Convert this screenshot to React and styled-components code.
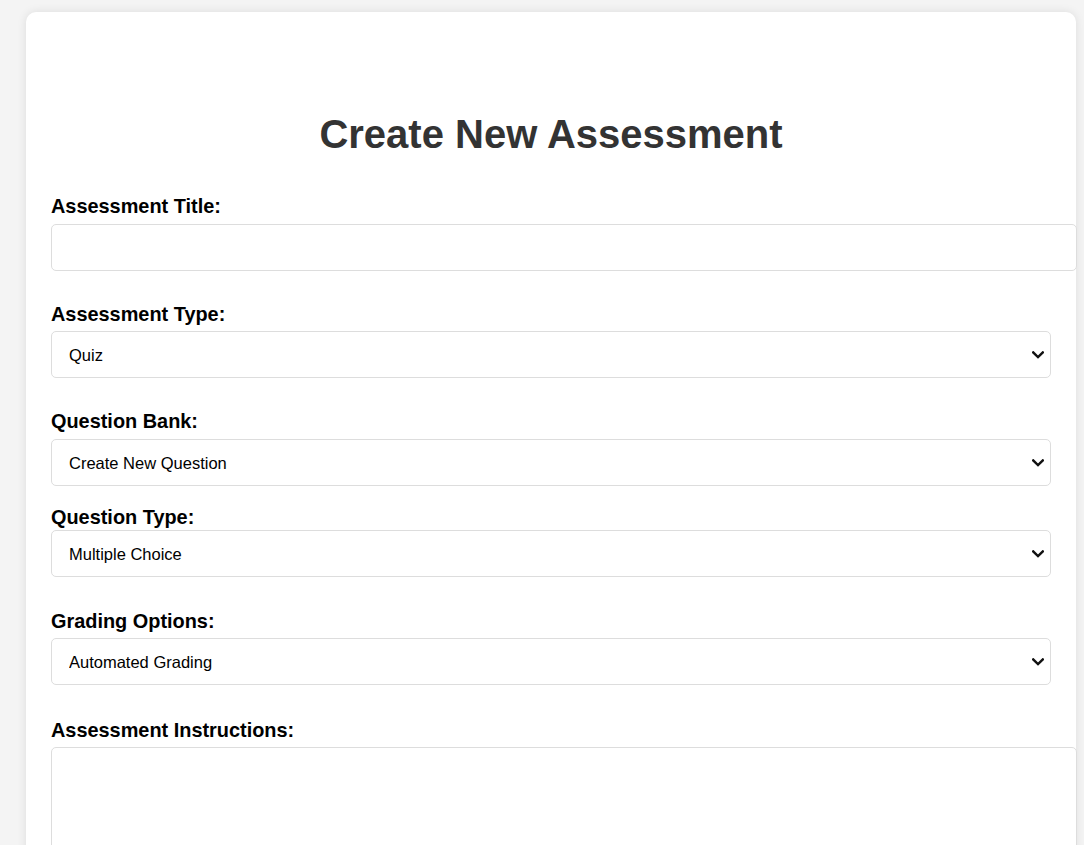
import React from "react";
import styled, { createGlobalStyle } from "styled-components";

const Global = createGlobalStyle`
  html, body { margin: 0; padding: 0; }
  body {
    background: #f4f4f4;
    font-family: "Liberation Sans", Arial, sans-serif;
    padding: 12px 8px 40px 26px;
  }
  * { font-family: "Liberation Sans", Arial, sans-serif; }
`;

const chevron =
  "data:image/svg+xml;utf8," +
  encodeURIComponent(
    '<svg xmlns="http://www.w3.org/2000/svg" width="12" height="8" viewBox="0 0 12 8"><path d="M1.2 1.4 L6 6 L10.8 1.4" fill="none" stroke="#111" stroke-width="2.4" stroke-linecap="square"/></svg>'
  );

const Card = styled.div`
  box-sizing: content-box;
  max-width: 1000px;
  background: #fff;
  padding: 99px 25px 30px;
  border-radius: 10px;
  box-shadow: 0 0 10px rgba(0, 0, 0, 0.1);
`;

const Title = styled.h1`
  margin: 0 0 38px;
  text-align: center;
  font-size: 40px;
  line-height: 46px;
  font-weight: 700;
  color: #333;
`;

const Form = styled.form`
  display: flex;
  flex-direction: column;
`;

const Group = styled.div`
  display: flex;
  flex-direction: column;
  margin-bottom: ${(p) => p.$gap ?? 32}px;
`;

const Label = styled.label`
  display: block;
  font-size: 19.9px;
  line-height: 23px;
  font-weight: 700;
  color: #000;
  margin-bottom: ${(p) => p.$mb ?? 6}px;
`;

const TextInput = styled.input`
  box-sizing: content-box;
  width: 100%;
  height: 21px;
  padding: 12px;
  border: 1px solid #ddd;
  border-radius: 5px;
  font-size: 16.5px;
  background: #fff;
  margin: 0;
  outline: none;
`;

const Select = styled.select`
  box-sizing: border-box;
  appearance: none;
  -webkit-appearance: none;
  width: 100%;
  height: 47px;
  padding: 0 30px 0 17px;
  border: 1px solid #ddd;
  border-radius: 5px;
  font-size: 16.5px;
  color: #000;
  background-color: #fff;
  background-image: url("${chevron}");
  background-repeat: no-repeat;
  background-position: right 6px center;
  background-size: 12px 8px;
  margin: 0;
  outline: none;
`;

const TextArea = styled.textarea`
  box-sizing: content-box;
  width: 100%;
  height: 150px;
  padding: 12px;
  border: 1px solid #ddd;
  border-radius: 5px;
  font-size: 16.5px;
  resize: vertical;
  margin: 0;
  outline: none;
`;

export default function App() {
  return (
    <>
      <Global />
      <Card>
        <Title>Create New Assessment</Title>
        <Form onSubmit={(e) => e.preventDefault()}>
          <Group>
            <Label htmlFor="title">Assessment Title:</Label>
            <TextInput id="title" type="text" />
          </Group>
          <Group>
            <Label htmlFor="type" $mb={5}>Assessment Type:</Label>
            <Select id="type" defaultValue="quiz">
              <option value="quiz">Quiz</option>
              <option value="exam">Exam</option>
              <option value="assignment">Assignment</option>
            </Select>
          </Group>
          <Group $gap={20}>
            <Label htmlFor="bank">Question Bank:</Label>
            <Select id="bank" defaultValue="new">
              <option value="new">Create New Question</option>
              <option value="existing">Use Existing Question</option>
            </Select>
          </Group>
          <Group $gap={33}>
            <Label htmlFor="qtype" $mb={1}>Question Type:</Label>
            <Select id="qtype" defaultValue="mc">
              <option value="mc">Multiple Choice</option>
              <option value="tf">True / False</option>
              <option value="short">Short Answer</option>
            </Select>
          </Group>
          <Group $gap={34}>
            <Label htmlFor="grading" $mb={5}>Grading Options:</Label>
            <Select id="grading" defaultValue="auto">
              <option value="auto">Automated Grading</option>
              <option value="manual">Manual Grading</option>
            </Select>
          </Group>
          <Group>
            <Label htmlFor="instructions" $mb={5}>Assessment Instructions:</Label>
            <TextArea id="instructions" />
          </Group>
        </Form>
      </Card>
    </>
  );
}
